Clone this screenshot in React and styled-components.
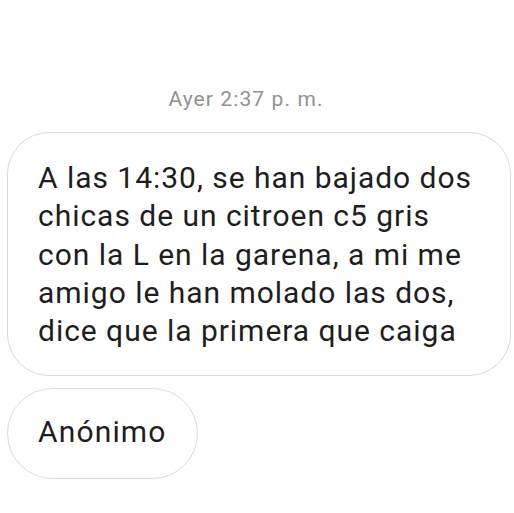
import React from 'react';
import styled, { createGlobalStyle } from 'styled-components';

const GlobalStyle = createGlobalStyle`
  html, body {
    margin: 0;
    padding: 0;
    background: #fff;
  }
  body {
    font-family: Roboto, "Noto Sans", sans-serif;
    -webkit-font-smoothing: antialiased;
  }
`;

const Thread = styled.div`
  width: 514px;
  height: 513px;
  box-sizing: border-box;
  padding: 87px 3px 0 7px;
  display: flex;
  flex-direction: column;
  align-items: flex-start;
  gap: 12px;
`;

const Stamp = styled.div`
  align-self: stretch;
  text-align: center;
  padding-right: 26px;
  font-size: 21px;
  line-height: 24px;
  letter-spacing: 1.1px;
  color: #929292;
  margin-bottom: 9px;
`;

const Bubble = styled.div`
  box-sizing: border-box;
  border: 1.5px solid #dadada;
  border-radius: ${p => (p.$pill ? '46px' : '42px')};
  padding: ${p => (p.$pill ? '24px 30px 26px 30px' : '26px 30px 25px 30px')};
  align-self: ${p => (p.$pill ? 'flex-start' : 'stretch')};
  font-size: 30px;
  line-height: 38.3px;
  letter-spacing: ${p => (p.$pill ? '1.15px' : '0.97px')};
  color: #1e1e1e;
  white-space: pre-line;
`;

export default function App() {
  return (
    <>
      <GlobalStyle />
      <Thread>
        <Stamp>Ayer 2:37 p. m.</Stamp>
        <Bubble>
          {'A las 14:30, se han bajado dos\nchicas de un citroen c5 gris\ncon la L en la garena, a mi me\namigo le han molado las dos,\ndice que la primera que caiga'}
        </Bubble>
        <Bubble $pill>Anónimo</Bubble>
      </Thread>
    </>
  );
}
